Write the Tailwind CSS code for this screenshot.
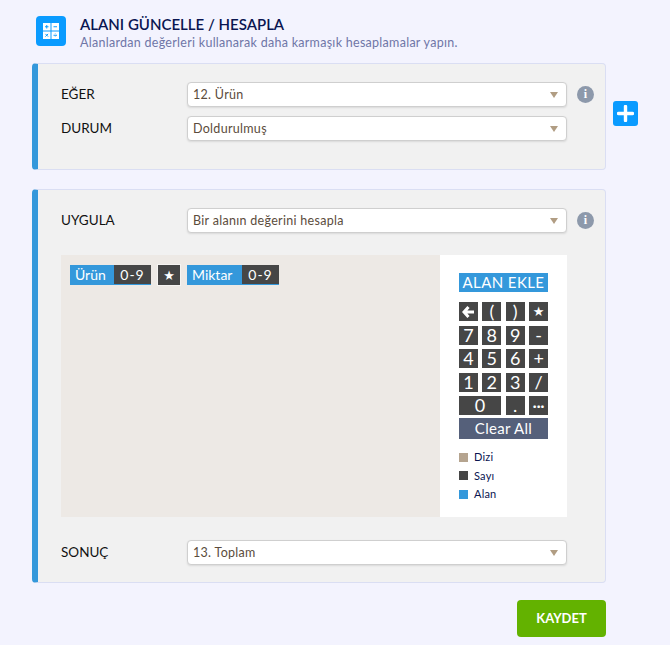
<!DOCTYPE html>
<html lang="tr">
<head>
<meta charset="utf-8">
<script src="https://cdn.jsdelivr.net/npm/@tailwindcss/browser@4"></script>
</head>
<body class="bg-[#f3f3fe] font-['Lato','Noto_Sans',sans-serif] w-[670px] h-[645px] overflow-hidden">
<div class="pl-[32px] w-[640px] pt-[16px]">
  <div class="flex items-start pl-[4px] h-[35px]">
    <div class="w-[30px] h-[30px] rounded-[4px] bg-[#0a9bff] flex items-center justify-center">
      <svg width="16" height="16" viewBox="0 0 16 16"><rect x="0" y="0" width="7.5" height="7.5" fill="#fff"/><rect x="8.5" y="0" width="7.5" height="7.5" fill="#fff"/><rect x="0" y="8.5" width="7.5" height="7.5" fill="#fff"/><rect x="8.5" y="8.5" width="7.5" height="7.5" fill="#fff"/><path d="M2 3.75h3.5M3.75 2v3.5M10.5 3.75H14M2.4 10.9l2.7 2.7M5.1 10.9l-2.7 2.7M10.5 12.25H14M12.25 10.5v.4M12.25 13.6v.4" stroke="#0a9bff" stroke-width="1" fill="none"/></svg>
    </div>
    <div class="ml-[14px] -mt-[1px]">
      <div class="text-[15px] leading-[18px] font-semibold text-[#0a1551]">ALANI GÜNCELLE / HESAPLA</div>
      <div class="text-[12.5px] leading-[16px] mt-[2px] text-[#6f76a7] tracking-[0.28px]">Alanlardan değerleri kullanarak daha karmaşık hesaplamalar yapın.</div>
    </div>
  </div>

  <div class="relative mt-[12px] h-[107px] w-[574px] bg-[#f1f1f1] border border-[#dadef3] border-l-[6px] border-l-[#3498db] rounded-[4px] pl-[23px] pr-[12px] pt-[18px]">
    <div class="flex items-center h-[25px]">
      <div class="w-[126px] shrink-0 text-[13.5px] font-normal text-[#111] -mt-[1px]">EĞER</div>
      <div class="relative w-[380px] shrink-0 h-[25px] bg-white border border-[#cfcfcf] rounded-[4px] shadow-[0_1px_2px_rgba(0,0,0,0.1)] pl-[5px] text-[12.5px] leading-[23px] text-[#5b4c3c] tracking-[0.3px]">12. Ürün<span class="absolute right-[8px] top-[9px] w-0 h-0 border-x-[4.5px] border-x-transparent border-t-[6px] border-t-[#b19d83]"></span></div>
      <div class="ml-[10px] w-[17px] h-[17px] shrink-0 rounded-full bg-[#8d99ab] text-white text-[12px] leading-[17px] text-center font-bold font-['Liberation_Serif',serif]">i</div>
    </div>
    <div class="flex items-center h-[25px] mt-[9px]">
      <div class="w-[126px] shrink-0 text-[13.5px] font-normal text-[#111] -mt-[1px]">DURUM</div>
      <div class="relative w-[380px] shrink-0 h-[25px] bg-white border border-[#cfcfcf] rounded-[4px] shadow-[0_1px_2px_rgba(0,0,0,0.1)] pl-[5px] text-[12.5px] leading-[23px] text-[#5b4c3c] tracking-[0.3px]">Doldurulmuş<span class="absolute right-[8px] top-[9px] w-0 h-0 border-x-[4.5px] border-x-transparent border-t-[6px] border-t-[#b19d83]"></span></div>
    </div>
    <div class="absolute left-[575px] top-[37px] w-[25px] h-[25px] rounded-[3px] bg-[#0a9bff] flex items-center justify-center">
      <svg width="17" height="17" viewBox="0 0 17 17"><path d="M8.5 1.5v14M1.5 8.5h14" stroke="#fff" stroke-width="3.4" stroke-linecap="round"/></svg>
    </div>
  </div>

  <div class="mt-[19px] h-[394px] w-[574px] bg-[#f1f1f1] border border-[#dadef3] border-l-[6px] border-l-[#3498db] rounded-[4px] pl-[23px] pr-[12px] pt-[18px]">
    <div class="flex items-center h-[25px]">
      <div class="w-[126px] shrink-0 text-[13.5px] font-normal text-[#111] -mt-[1px]">UYGULA</div>
      <div class="relative w-[380px] shrink-0 h-[25px] bg-white border border-[#cfcfcf] rounded-[4px] shadow-[0_1px_2px_rgba(0,0,0,0.1)] pl-[5px] text-[12.5px] leading-[23px] text-[#5b4c3c] tracking-[0.3px]">Bir alanın değerini hesapla<span class="absolute right-[8px] top-[9px] w-0 h-0 border-x-[4.5px] border-x-transparent border-t-[6px] border-t-[#b19d83]"></span></div>
      <div class="ml-[10px] w-[17px] h-[17px] shrink-0 rounded-full bg-[#8d99ab] text-white text-[12px] leading-[17px] text-center font-bold font-['Liberation_Serif',serif]">i</div>
    </div>
    <div class="flex mt-[22px] w-[506px] h-[262px]">
      <div class="w-[379px] bg-[#ede9e5] pl-[9px] pt-[10px]">
        <div class="flex text-white text-[14px] leading-[19px] h-[20px]">
          <div class="w-[44px] bg-[#3498db] border-b border-b-[#3498db] pl-[5px]">Ürün</div>
          <div class="w-[37px] bg-[#464646] border-b border-b-[#3498db] text-center tracking-[1px]">0-9</div>
          <div class="w-[22px] ml-[7px] bg-[#464646] ring-1 ring-white/50 flex items-center justify-center font-['DejaVu_Sans',sans-serif] text-[13px] leading-[19px]">★</div>
          <div class="w-[55px] ml-[7px] bg-[#3498db] border-b border-b-[#3498db] pl-[5px]">Miktar</div>
          <div class="w-[37px] bg-[#464646] border-b border-b-[#3498db] text-center tracking-[1px]">0-9</div>
        </div>
      </div>
      <div class="w-[127px] bg-white pl-[19px] pt-[18px]">
        <div class="w-[89px] h-[19px] bg-[#3498db] text-white text-center text-[15px] leading-[19px] tracking-[0.4px]">ALAN EKLE</div>
        <div class="grid grid-cols-4 w-[89px] gap-x-[4.67px] gap-y-[4.5px] mt-[10px] auto-rows-[19px] text-white text-[18px] leading-[19px] text-center">
          <div class="bg-[#464646] flex items-center justify-center"><svg width="13" height="12" viewBox="0 0 13 12"><path d="M6.5 1 2 6l4.5 5M3 6h9" stroke="#fff" stroke-width="3" fill="none"/></svg></div>
          <div class="bg-[#464646]">(</div>
          <div class="bg-[#464646]">)</div>
          <div class="bg-[#464646] flex items-center justify-center font-['DejaVu_Sans',sans-serif] text-[13px]">★</div>
          <div class="bg-[#464646]">7</div>
          <div class="bg-[#464646]">8</div>
          <div class="bg-[#464646]">9</div>
          <div class="bg-[#464646]">-</div>
          <div class="bg-[#464646]">4</div>
          <div class="bg-[#464646]">5</div>
          <div class="bg-[#464646]">6</div>
          <div class="bg-[#464646]">+</div>
          <div class="bg-[#464646]">1</div>
          <div class="bg-[#464646]">2</div>
          <div class="bg-[#464646]">3</div>
          <div class="bg-[#464646]">/</div>
          <div class="bg-[#464646] col-span-2">0</div>
          <div class="bg-[#464646]">.</div>
          <div class="bg-[#464646] flex items-center justify-center text-[14px] leading-[14px] font-bold">···</div>
        </div>
        <div class="w-[89px] h-[21px] mt-[3px] bg-[#55607a] text-white text-center text-[15px] leading-[21px] tracking-[0.3px]">Clear All</div>
        <div class="mt-[9px] text-[11px] leading-[18.5px] text-[#0a1551] tracking-[0.2px]">
          <div class="flex items-center"><span class="w-[9px] h-[9px] bg-[#b5a48f] mr-[6px]"></span>Dizi</div>
          <div class="flex items-center"><span class="w-[9px] h-[9px] bg-[#464646] mr-[6px]"></span>Sayı</div>
          <div class="flex items-center"><span class="w-[9px] h-[9px] bg-[#3498db] mr-[6px]"></span>Alan</div>
        </div>
      </div>
    </div>
    <div class="flex items-center h-[25px] mt-[23px]">
      <div class="w-[126px] shrink-0 text-[13.5px] font-normal text-[#111] -mt-[1px]">SONUÇ</div>
      <div class="relative w-[380px] shrink-0 h-[25px] bg-white border border-[#cfcfcf] rounded-[4px] shadow-[0_1px_2px_rgba(0,0,0,0.1)] pl-[5px] text-[12.5px] leading-[23px] text-[#5b4c3c] tracking-[0.3px]">13. Toplam<span class="absolute right-[8px] top-[9px] w-0 h-0 border-x-[4.5px] border-x-transparent border-t-[6px] border-t-[#b19d83]"></span></div>
    </div>
  </div>

  <div class="flex justify-end w-[574px] mt-[17px]">
    <div class="w-[89px] h-[37px] rounded-[4px] bg-[#63b200] text-white text-center text-[13px] font-bold leading-[36px]">KAYDET</div>
  </div>
</div>
</body>
</html>
